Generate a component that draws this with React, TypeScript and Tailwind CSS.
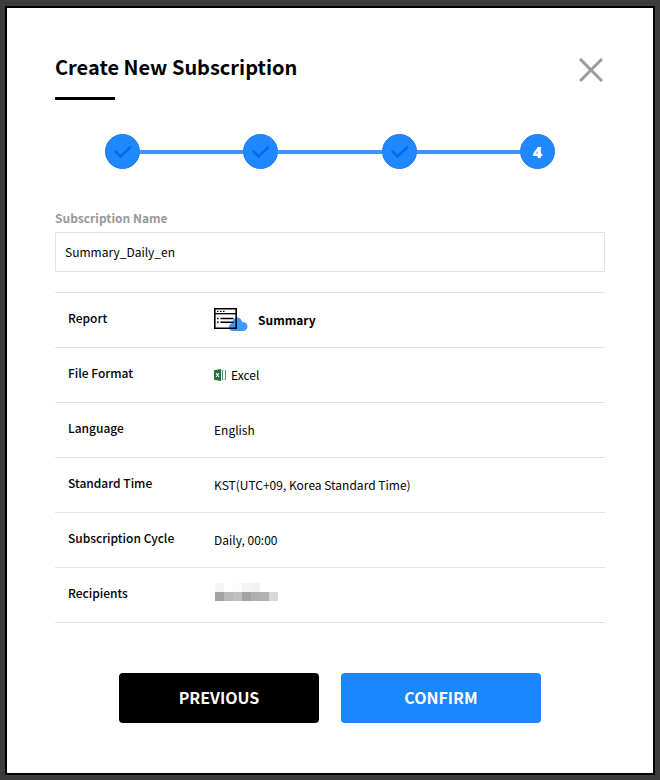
import type { ReactNode } from "react"

const CENSORED_ROWS = [
  ["bg-[#f5f5f5]", "bg-white", "bg-[#fcfcfc]", "bg-[#f4f4f4]", "bg-[#f2f2f2]", "bg-white", "bg-white"],
  ["bg-[#a3a3a3]", "bg-[#b9b9b9]", "bg-[#c0c0c0]", "bg-[#a3a3a3]", "bg-[#afafaf]", "bg-[#b2b2b2]", "bg-[#d9d9d9]"],
]

function ReportIcon() {
  return (
    <svg width="34" height="26" viewBox="0 0 34 26" aria-hidden="true">
      <path
        d="M19 24a4 4 0 0 1-4-4c0-2 1.400-3.600 3.300-3.900C18.500 13 20.600 10.500 23.200 10.500c2.600 0 4.400 1.800 4.900 4.500 2.900-.2 5.400 1.800 5.400 4.500 0 2.600-2 4.500-4.700 4.500z"
        fill="#3d98ff"
      />
      <path d="M.8 1.800h21.400v19.400H.8z" fill="none" stroke="#000" strokeWidth="1.600" />
      <path d="M1 6.700h21" stroke="#000" strokeWidth="1.300" />
      <path d="M3 4.400h1.500M6 4.400h1.500M9 4.400h1.500" stroke="#000" strokeWidth="1.200" />
      <path d="M3 11.500h1.500M3 15.300h1.500M6.500 11.500h13M6.500 15.300h13" stroke="#000" strokeWidth="1.600" />
    </svg>
  )
}

function ExcelIcon() {
  return (
    <svg width="12" height="12" viewBox="0 0 12 12" aria-hidden="true">
      <path d="M0 1.300 7 0v12l-7-1.300z" fill="#1d7044" />
      <path d="M2 4l3 4M5 4 2 8" stroke="#fff" strokeWidth="1.100" />
      <path d="M8.500 1.500v9M11.500 1.500v9" stroke="#1d7044" strokeWidth="1" opacity=".75" />
      <path d="M7 1.500h5M7 10.500h5" stroke="#1d7044" strokeWidth="1" opacity=".3" />
    </svg>
  )
}

function Step({ number, done }: { number: number; done: boolean }) {
  return (
    <li className="flex size-[35px] shrink-0 items-center justify-center rounded-full border border-[#1f7ae6] bg-[#1f88ff] font-['Open_Sans',sans-serif] text-base font-extrabold text-white">
      {done ? (
        <svg width="19" height="15" viewBox="0 0 19 15" role="img" aria-label={`Step ${number} done`}>
          <path d="m2.500 7.500 5 5L17 3.500" fill="none" stroke="#006df0" strokeWidth="2.600" strokeLinecap="round" />
        </svg>
      ) : (
        number
      )}
    </li>
  )
}

function StepLine() {
  return <li aria-hidden="true" className="h-1 flex-1 bg-[#3d94ff]" />
}

function Row({ label, children }: { label: string; children: ReactNode }) {
  return (
    <tr className="h-[55px] border-y border-[#e4e4e4]">
      <th scope="row" className="w-[159px] pb-1 pl-[13px] text-left font-medium">
        {label}
      </th>
      <td>{children}</td>
    </tr>
  )
}

export default function App() {
  return (
    <div className="min-h-screen bg-[#3c3c3c] px-[5px] pt-1.5 pb-[5px] font-['Noto_Sans_CJK_KR',sans-serif] text-xs leading-5 text-black">
      <main className="border-2 border-black bg-white px-12 pt-[43px] pb-[50px]">
        <header className="flex items-start justify-between">
          <div>
            <h1 className="text-xl leading-8 font-bold">Create New Subscription</h1>
            <div className="mt-3.5 h-[3px] w-[60px] bg-black" />
          </div>
          <button type="button" aria-label="Close" className="mt-[7px] mr-0.5">
            <svg width="24" height="24" viewBox="0 0 24 24">
              <path d="m1 1 22 22M23 1 1 23" stroke="#9b9b9b" strokeWidth="3" />
            </svg>
          </button>
        </header>

        <ol className="mt-[34px] flex items-center px-[50px]">
          <Step number={1} done />
          <StepLine />
          <Step number={2} done />
          <StepLine />
          <Step number={3} done />
          <StepLine />
          <Step number={4} done={false} />
        </ol>

        <form className="mt-[39px]">
          <label htmlFor="name" className="block font-bold text-[#999]">
            Subscription Name
          </label>
          <input
            id="name"
            defaultValue="Summary_Daily_en"
            className="mt-1 block h-10 w-full rounded-[1px] border border-[#e1e1e1] px-[9px] pb-0.5 outline-none"
          />

          <table className="mt-5 w-full border-collapse">
            <tbody>
              <Row label="Report">
                <span className="flex items-center gap-2.5 font-bold">
                  <ReportIcon />
                  Summary
                </span>
              </Row>
              <Row label="File Format">
                <span className="flex items-center gap-[5px]">
                  <ExcelIcon />
                  Excel
                </span>
              </Row>
              <Row label="Language">English</Row>
              <Row label="Standard Time">KST(UTC+09, Korea Standard Time)</Row>
              <Row label="Subscription Cycle">Daily, 00:00</Row>
              <Row label="Recipients">
                <div className="pb-1.5 pl-px">
                  {CENSORED_ROWS.map((cells, i) => (
                    <div key={i} className="flex">
                      {cells.map((color, j) => (
                        <span key={j} className={`size-[9px] ${color}`} />
                      ))}
                    </div>
                  ))}
                </div>
              </Row>
            </tbody>
          </table>

          <div className="mt-[50px] flex justify-center gap-[22px] text-base font-bold text-white">
            <button type="button" className="h-[50px] w-[200px] rounded bg-black pb-0.5">
              PREVIOUS
            </button>
            <button type="button" className="h-[50px] w-[200px] rounded bg-[#1a87ff] pb-0.5">
              CONFIRM
            </button>
          </div>
        </form>
      </main>
    </div>
  )
}
